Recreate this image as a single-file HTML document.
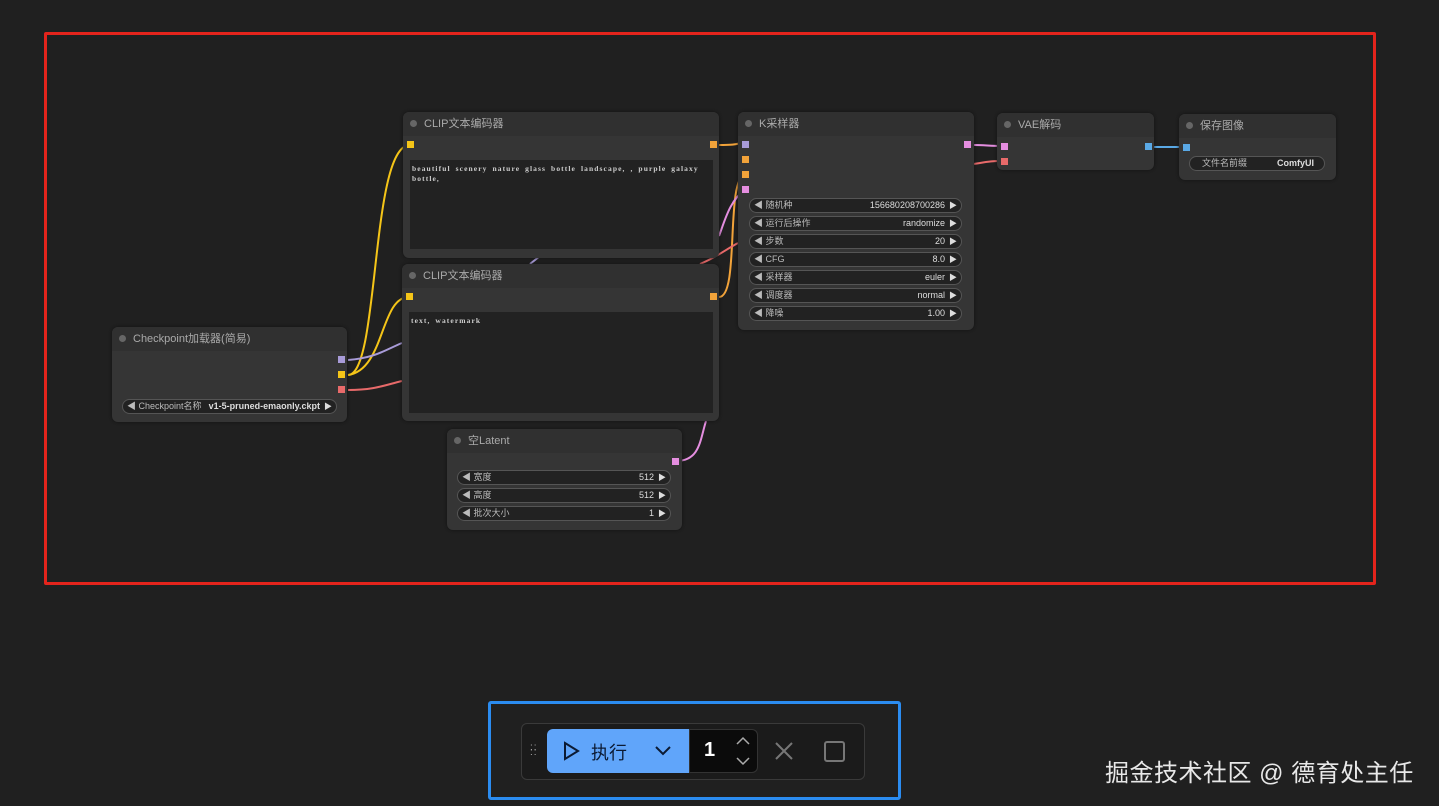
<!DOCTYPE html>
<html><head><meta charset="utf-8"><style>
body{margin:0;width:1439px;height:806px;background:#202020;position:relative;overflow:hidden;font-family:"Liberation Sans","Noto Sans CJK SC",sans-serif;}
.n{position:absolute;background:#353535;border-radius:6px;box-shadow:0 0 3px #111;}
.t{position:absolute;left:0;top:0;right:0;height:24px;background:#303030;border-radius:6px 6px 0 0;color:#aaa;font-size:11px;line-height:24px;padding-left:21px}
.t:before{content:"";position:absolute;left:7px;top:8px;width:7px;height:7px;border-radius:50%;background:#666}
.ta{position:absolute;background:#222;color:#ccc;font-family:"Liberation Serif",serif;font-weight:bold;font-size:7.5px;padding:4px 2px;line-height:10px;box-sizing:border-box;letter-spacing:1.1px;word-spacing:2px}
.w{position:absolute;height:15px;border:1px solid #555;background:#222;border-radius:8px;box-sizing:border-box;color:#bbb;font-size:9px;line-height:13px}
.w .l{position:absolute;left:4px;top:0}
.w .r{position:absolute;right:16px;top:0;color:#ddd}
.w .a{position:absolute;right:4px;top:0;color:#ddd;font-size:8px}
.p{position:absolute;width:7px;height:7px}
</style></head><body>
<div style="position:absolute;left:44px;top:32px;width:1326px;height:547px;border:3px solid #e3241c;border-radius:2px"></div>
<svg width="1439" height="806" style="position:absolute;left:0;top:0" fill="none" stroke-width="2">
<path d="M348 375 C380 375 370 145 410 145" stroke="#f5c518"/>
<path d="M348 375 C385 370 380 297 409 297" stroke="#f5c518"/>
<path d="M348 360 C375 358 385 350 402 343" stroke="#a89bd8"/>
<path d="M348 390 C375 390 385 385 402 381" stroke="#e86a6a"/>
<path d="M530 264 L540 256" stroke="#a89bd8"/>
<path d="M719 145 C730 145 735 145 745 142" stroke="#f2a33a"/>
<path d="M719 297 C740 297 725 180 745 174" stroke="#f2a33a"/>
<path d="M719 236 C725 220 730 200 745 190" stroke="#e58ee0"/>
<path d="M700 264 C715 258 725 250 738 243" stroke="#e86a6a"/>
<path d="M676 461 C700 461 700 440 706 421" stroke="#e58ee0"/>
<path d="M974 145 C985 145 990 146 1003 146" stroke="#e58ee0"/>
<path d="M974 164 C985 162 990 161 1003 161" stroke="#e86a6a"/>
<path d="M1150 147 C1160 147 1170 147 1184 147" stroke="#5aa9e6"/>
</svg>
<div class="n" style="left:403px;top:112px;width:316px;height:146px"><div class="t">CLIP文本编码器</div>
<div class="ta" style="left:7px;top:48px;width:303px;height:89px">beautiful scenery nature glass bottle landscape, , purple galaxy bottle,</div></div>
<div class="p" style="left:407px;top:141px;background:#f5c518"></div><div class="p" style="left:710px;top:141px;background:#f2a33a"></div>
<div class="n" style="left:402px;top:264px;width:317px;height:157px"><div class="t">CLIP文本编码器</div>
<div class="ta" style="left:7px;top:48px;width:304px;height:101px">text, watermark</div></div>
<div class="p" style="left:406px;top:293px;background:#f5c518"></div><div class="p" style="left:710px;top:293px;background:#f2a33a"></div>
<div class="n" style="left:112px;top:327px;width:235px;height:95px"><div class="t">Checkpoint加载器(简易)</div>
<div class="w" style="left:10px;top:72px;width:215px"><span class="l">◀ Checkpoint名称</span><span class="r" style="font-weight:bold">v1-5-pruned-emaonly.ckpt</span><span class="a">▶</span></div></div>
<div class="p" style="left:338px;top:356px;background:#a89bd8"></div><div class="p" style="left:338px;top:371px;background:#f5c518"></div><div class="p" style="left:338px;top:386px;background:#e86a6a"></div>
<div class="n" style="left:447px;top:429px;width:235px;height:101px"><div class="t">空Latent</div>
<div class="w" style="left:10px;top:41px;width:214px"><span class="l">◀ 宽度</span><span class="r">512</span><span class="a">▶</span></div>
<div class="w" style="left:10px;top:59px;width:214px"><span class="l">◀ 高度</span><span class="r">512</span><span class="a">▶</span></div>
<div class="w" style="left:10px;top:77px;width:214px"><span class="l">◀ 批次大小</span><span class="r">1</span><span class="a">▶</span></div></div>
<div class="p" style="left:672px;top:458px;background:#e58ee0"></div>
<div class="n" style="left:738px;top:112px;width:236px;height:218px"><div class="t">K采样器</div>
<div class="w" style="left:11px;top:86px;width:213px"><span class="l">◀ 随机种</span><span class="r">156680208700286</span><span class="a">▶</span></div>
<div class="w" style="left:11px;top:104px;width:213px"><span class="l">◀ 运行后操作</span><span class="r">randomize</span><span class="a">▶</span></div>
<div class="w" style="left:11px;top:122px;width:213px"><span class="l">◀ 步数</span><span class="r">20</span><span class="a">▶</span></div>
<div class="w" style="left:11px;top:140px;width:213px"><span class="l">◀ CFG</span><span class="r">8.0</span><span class="a">▶</span></div>
<div class="w" style="left:11px;top:158px;width:213px"><span class="l">◀ 采样器</span><span class="r">euler</span><span class="a">▶</span></div>
<div class="w" style="left:11px;top:176px;width:213px"><span class="l">◀ 调度器</span><span class="r">normal</span><span class="a">▶</span></div>
<div class="w" style="left:11px;top:194px;width:213px"><span class="l">◀ 降噪</span><span class="r">1.00</span><span class="a">▶</span></div></div>
<div class="p" style="left:742px;top:141px;background:#a89bd8"></div><div class="p" style="left:742px;top:156px;background:#f2a33a"></div><div class="p" style="left:742px;top:171px;background:#f2a33a"></div><div class="p" style="left:742px;top:186px;background:#e58ee0"></div><div class="p" style="left:964px;top:141px;background:#e58ee0"></div>
<div class="n" style="left:997px;top:113px;width:157px;height:57px"><div class="t">VAE解码</div></div>
<div class="p" style="left:1001px;top:143px;background:#e58ee0"></div><div class="p" style="left:1001px;top:158px;background:#e86a6a"></div><div class="p" style="left:1145px;top:143px;background:#5aa9e6"></div>
<div class="n" style="left:1179px;top:114px;width:157px;height:66px"><div class="t">保存图像</div>
<div class="w" style="left:10px;top:42px;width:136px"><span class="l" style="left:12px">文件名前缀</span><span class="r" style="right:10px;font-weight:bold">ComfyUI</span></div></div>
<div class="p" style="left:1183px;top:144px;background:#5aa9e6"></div>
<div style="position:absolute;left:488px;top:701px;width:407px;height:93px;border:3px solid #2b8cf0;border-radius:3px"></div>
<div style="position:absolute;left:521px;top:723px;width:342px;height:55px;background:#1b1b1b;border:1px solid #3a3a3a;border-radius:6px"></div>
<div style="position:absolute;left:530px;top:745px;color:#aaa;font-size:10px;line-height:5px;letter-spacing:1px">::<br>::</div>
<div style="position:absolute;left:547px;top:729px;width:142px;height:44px;background:#60a5fa;border-radius:6px 0 0 6px"></div>
<svg style="position:absolute;left:560px;top:740px" width="120" height="24" fill="none" stroke="#0b1a33" stroke-width="2"><path d="M5 3 L18 11 L5 19 Z"/><path d="M96 7 L103 14 L110 7"/></svg>
<div style="position:absolute;left:591px;top:739px;font-size:18px;color:#0b1a33">执行</div>
<div style="position:absolute;left:689px;top:729px;width:69px;height:44px;background:#0b0b0b;border:1px solid #333;border-radius:0 6px 6px 0;box-sizing:border-box"></div>
<div style="position:absolute;left:704px;top:739px;font-size:20px;color:#fff;font-weight:bold">1</div>
<svg style="position:absolute;left:734px;top:734px" width="18" height="34" fill="none" stroke="#aaa" stroke-width="1.5"><path d="M3 10 L9 4 L15 10"/><path d="M3 24 L9 30 L15 24"/></svg>
<svg style="position:absolute;left:774px;top:741px" width="20" height="20" stroke="#777" stroke-width="2"><path d="M2 2 L18 18 M18 2 L2 18"/></svg>
<div style="position:absolute;left:824px;top:741px;width:17px;height:17px;border:2px solid #777;border-radius:3px"></div>
<div style="position:absolute;left:1105px;top:753px;font-size:24px;letter-spacing:0.5px;color:#e8e8e8;white-space:nowrap">掘金技术社区 @ 德育处主任</div>
</body></html>
